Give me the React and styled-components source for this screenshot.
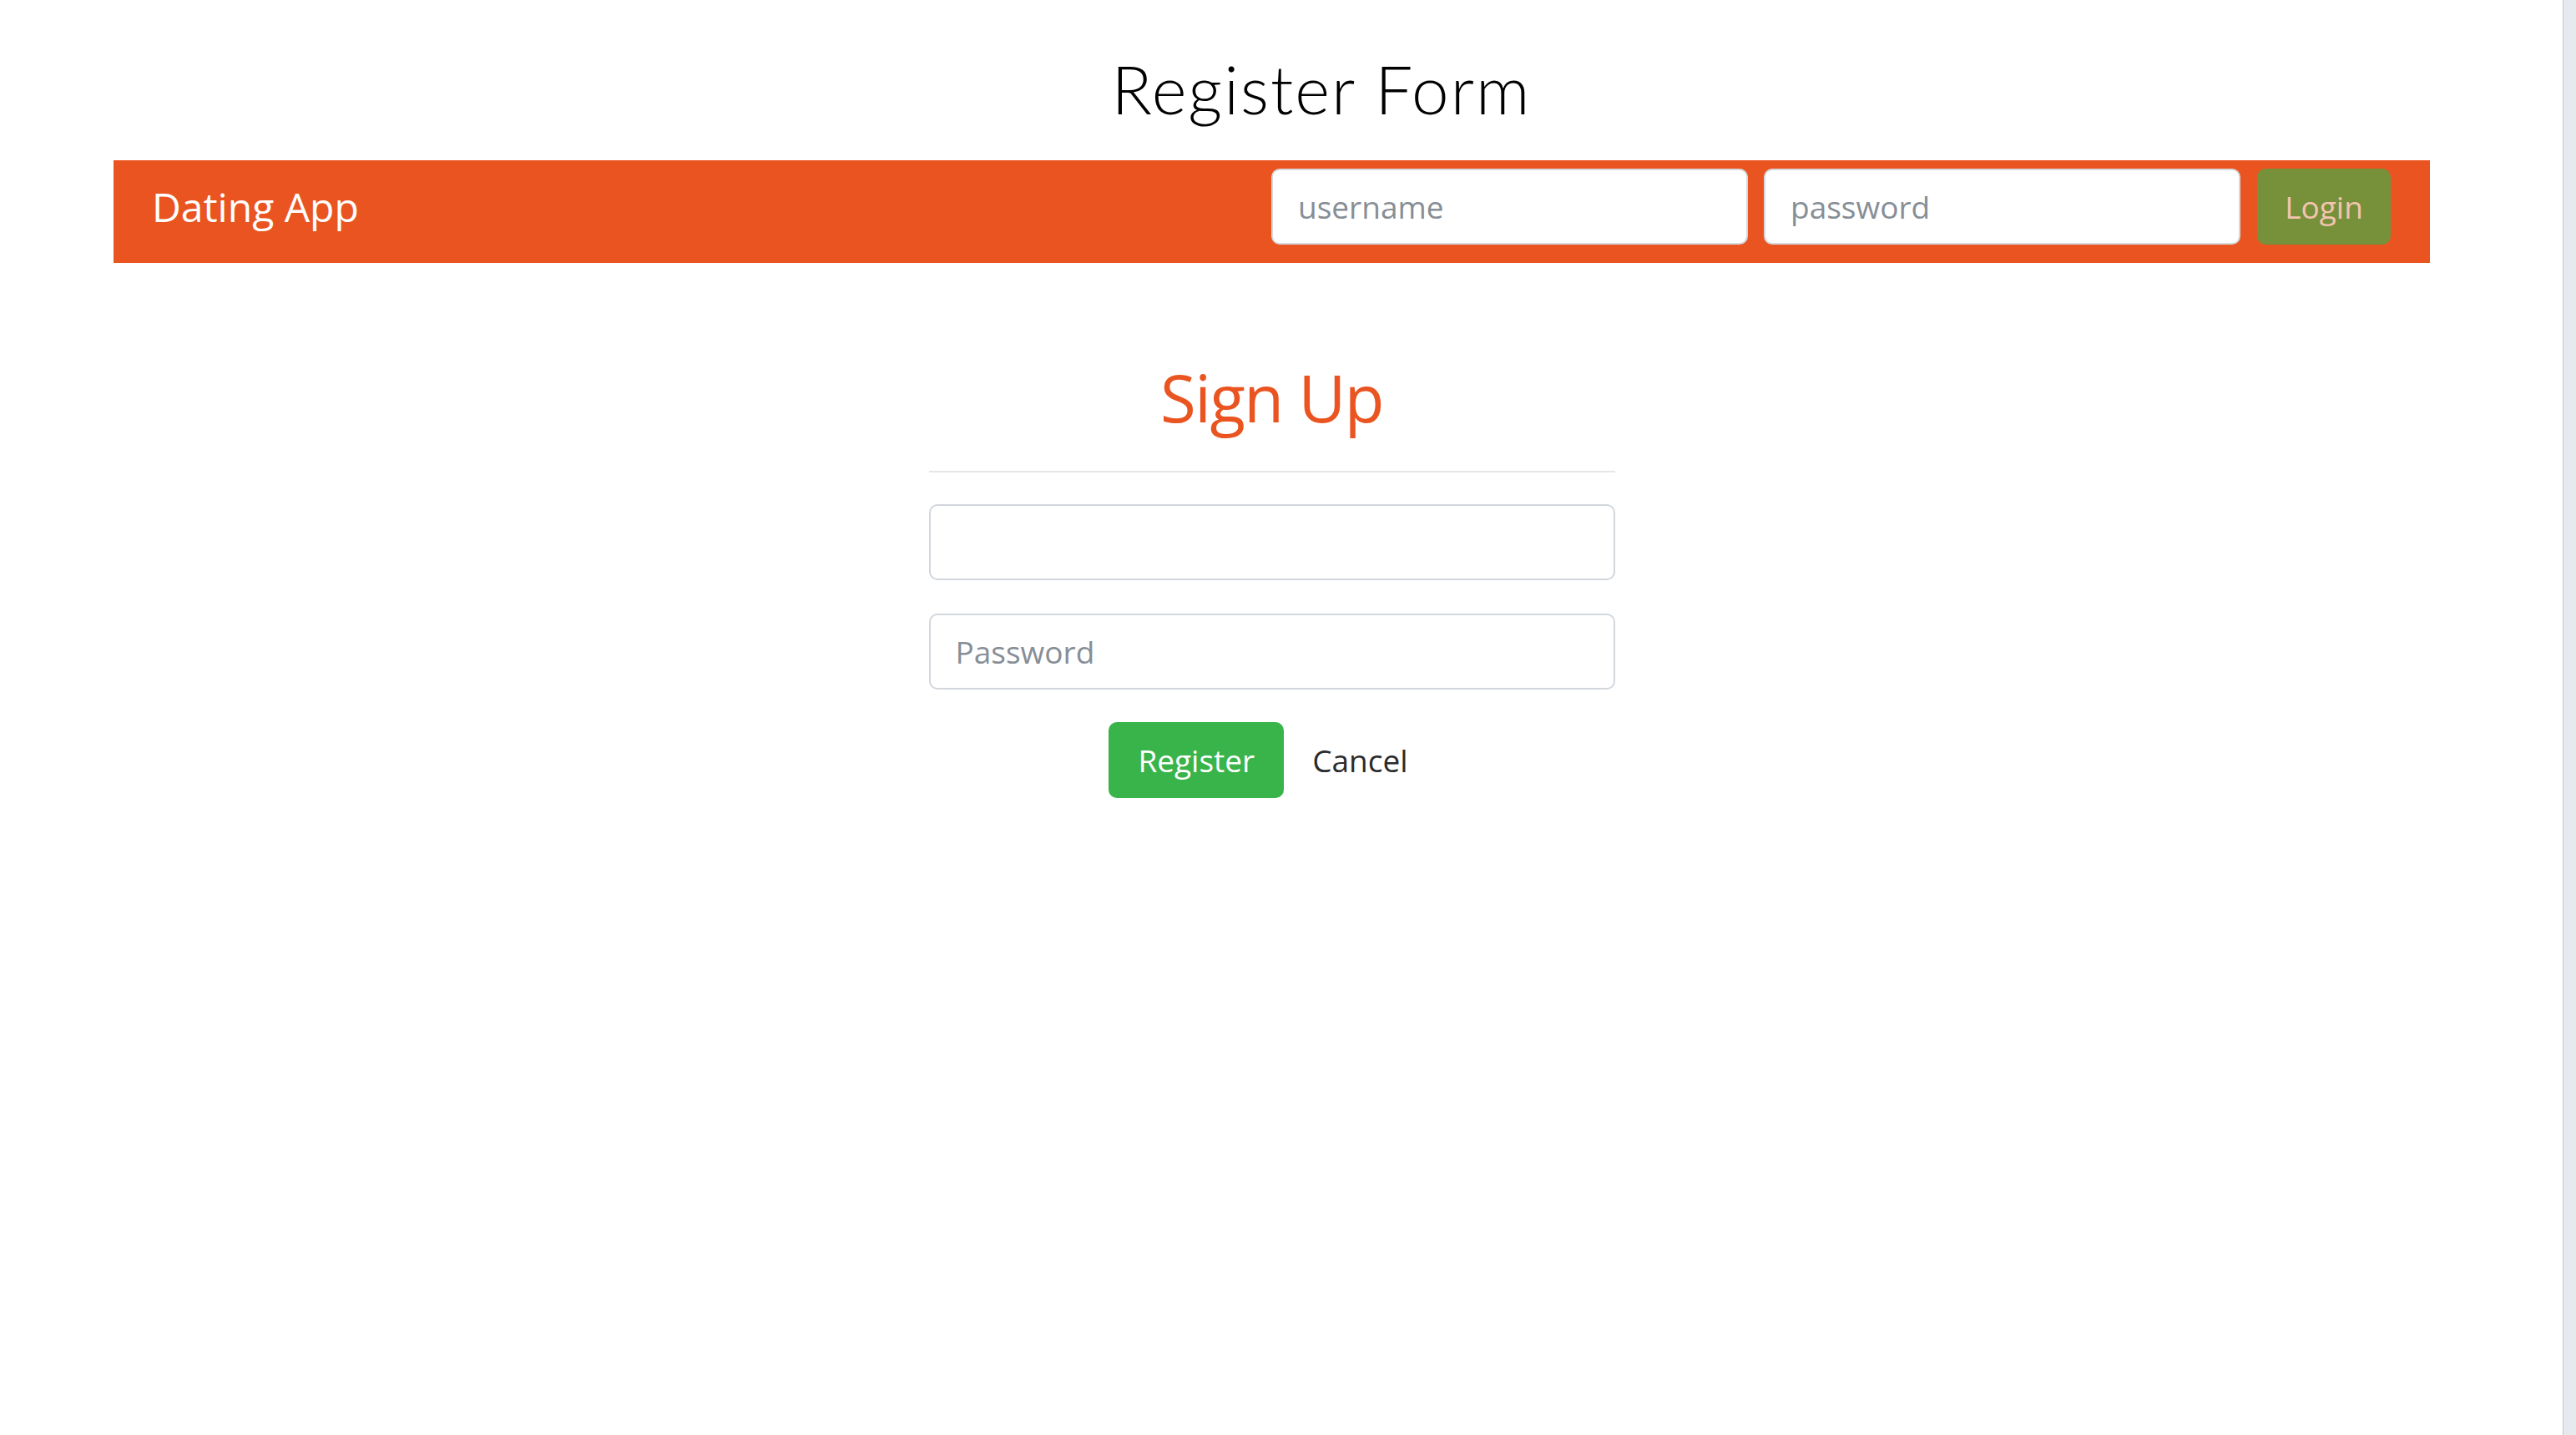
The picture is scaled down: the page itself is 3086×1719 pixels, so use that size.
import React from "react";
import styled, { createGlobalStyle } from "styled-components";

const GlobalStyle = createGlobalStyle`
  html, body {
    margin: 0;
    padding: 0;
    background: #ffffff;
  }
  body {
    font-family: "Open Sans", "Noto Sans", sans-serif;
    color: #212529;
  }
  * { box-sizing: border-box; }
`;

const Page = styled.div`
  display: flex;
  min-height: 100vh;
`;

const Main = styled.main`
  flex: 1;
  display: flex;
  flex-direction: column;
`;

const Rail = styled.div`
  width: 16px;
  flex-shrink: 0;
  background: #e6eaee;
  border-left: 1px solid #c4c6c8;
`;

const Title = styled.h1`
  margin: 59px 0 0;
  padding-left: 96px;
  text-align: center;
  font-family: "Lato", "Open Sans", sans-serif;
  font-weight: 300;
  font-size: 80px;
  letter-spacing: 2px;
  line-height: 95px;
  color: #000;
`;

const Container = styled.div`
  margin: 38px 0 0 136px;
  width: 2775px;
`;

const Navbar = styled.nav`
  display: flex;
  align-items: center;
  height: 123px;
  padding: 10px 47px 22px 46px;
  background: #e95420;
`;

const Brand = styled.a`
  font-size: 48px;
  color: #ffffff;
  text-decoration: none;
  line-height: 1;
`;

const NavForm = styled.form`
  margin-left: auto;
  display: flex;
  align-items: center;
  gap: 19px;
`;

const NavInput = styled.input`
  width: 571px;
  height: 91px;
  border: 2px solid #d4d9de;
  border-radius: 10px;
  padding: 0 30px;
  font-family: inherit;
  font-size: 37px;
  color: #495057;
  background: #fff;
  outline: none;
  &::placeholder { color: #868e96; }
`;

const LoginButton = styled.button`
  width: 160px;
  height: 91px;
  margin-left: 1px;
  border: none;
  border-radius: 10px;
  background: #77913a;
  color: #f3c4b0;
  font-family: inherit;
  font-size: 37px;
  cursor: pointer;
`;

const SignUp = styled.form`
  width: 822px;
  margin: 115px auto 0;
  display: flex;
  flex-direction: column;
`;

const Heading = styled.h2`
  margin: 0;
  text-align: center;
  font-size: 78px;
  letter-spacing: -1.5px;
  line-height: 92px;
  font-weight: 400;
  color: #e95420;
`;

const Divider = styled.hr`
  margin: 42px 0 38px;
  border: none;
  height: 2px;
  background: #e6e6e6;
`;

const Fields = styled.div`
  display: flex;
  flex-direction: column;
  gap: 40px;
`;

const Field = styled.input`
  width: 100%;
  height: 91px;
  border: 2px solid #d2d7dc;
  border-radius: 10px;
  padding: 0 30px;
  font-family: inherit;
  font-size: 37px;
  color: #495057;
  background: #fff;
  outline: none;
  &::placeholder { color: #868e96; }
`;

const Actions = styled.div`
  margin-top: 39px;
  display: flex;
  justify-content: center;
  gap: 2px;
`;

const ActionButton = styled.button`
  height: 91px;
  padding: 0 ${(p) => (p.$primary ? "35px" : "32px")};
  border: none;
  border-radius: 10px;
  font-family: inherit;
  font-size: 37px;
  cursor: pointer;
  background: ${(p) => (p.$primary ? "#38b44a" : "transparent")};
  color: ${(p) => (p.$primary ? "#ffffff" : "#2b2b2b")};
`;

export default function App() {
  return (
    <>
      <GlobalStyle />
      <Page>
        <Main>
          <Title>Register Form</Title>
          <Container>
            <Navbar>
              <Brand href="#">Dating App</Brand>
              <NavForm onSubmit={(e) => e.preventDefault()}>
                <NavInput type="text" placeholder="username" />
                <NavInput type="password" placeholder="password" />
                <LoginButton type="submit">Login</LoginButton>
              </NavForm>
            </Navbar>
            <SignUp onSubmit={(e) => e.preventDefault()}>
              <Heading>Sign Up</Heading>
              <Divider />
              <Fields>
                <Field type="text" />
                <Field type="password" placeholder="Password" />
              </Fields>
              <Actions>
                <ActionButton type="submit" $primary>Register</ActionButton>
                <ActionButton type="button">Cancel</ActionButton>
              </Actions>
            </SignUp>
          </Container>
        </Main>
        <Rail />
      </Page>
    </>
  );
}
